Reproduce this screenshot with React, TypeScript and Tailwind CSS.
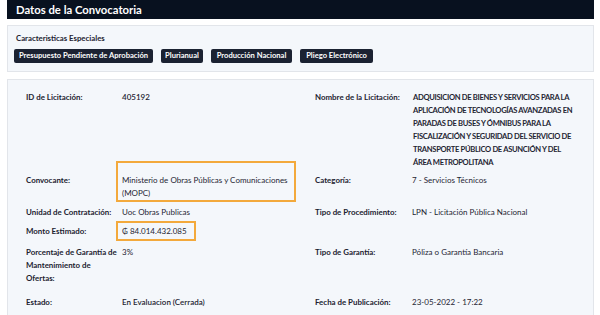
const nombre = [
  'ADQUISICION DE BIENES Y SERVICIOS PARA LA',
  'APLICACIÓN DE TECNOLOGÍAS AVANZADAS EN',
  'PARADAS DE BUSES Y ÓMNIBUS PARA LA',
  'FISCALIZACIÓN Y SEGURIDAD DEL SERVICIO DE',
  'TRANSPORTE PÚBLICO DE ASUNCIÓN Y DEL',
  'ÁREA METROPOLITANA',
];

const badges = [
  { t: 'Presupuesto Pendiente de Aprobación', w: 'w-[139px]' },
  { t: 'Plurianual', w: 'w-[42px]' },
  { t: 'Producción Nacional', w: 'w-[81px]' },
  { t: 'Pliego Electrónico', w: 'w-[73px]' },
];

const Label = ({ children }: { children: React.ReactNode }) => (
  <div className="font-bold text-[7.9px] text-[#1c2230] whitespace-nowrap">{children}</div>
);

// orange annotation frame drawn over a value
const Highlight = ({ className }: { className: string }) => (
  <span className={`pointer-events-none absolute border-2 border-[#f3a93c] ${className}`} />
);

const App = () => {
  return (
    <div className="w-[600px] h-[315px] overflow-hidden bg-white font-['Lato','Liberation_Sans',sans-serif] text-[8px] leading-[13px] text-[#1f2533]">
      <div className="mx-[7px] w-[587px]">
        {/* Header */}
        <div className="h-[19px] bg-[#08111f] flex items-center pl-[9px]">
          <h2 className="text-white font-bold text-[11.3px] leading-none">Datos de la Convocatoria</h2>
        </div>

        {/* Caracteristicas */}
        <div className="mt-[6px] border border-[#e2e5ea] bg-[#f4f7fb] pt-[6px] pb-[8px] px-[6px]">
          <div className="font-bold ml-[2px] text-[7.8px] text-[#1c2230]">Caracteristicas Especiales</div>
          <div className="mt-[4px] flex gap-[8px]">
            {badges.map((b) => (
              <span
                key={b.t}
                className={`${b.w} h-[14px] flex items-center justify-center rounded-[2px] bg-[#1b2232] text-white font-bold text-[7.6px] leading-none whitespace-nowrap`}
              >
                {b.t}
              </span>
            ))}
          </div>
        </div>

        {/* Datos */}
        <div className="mt-[7px] border border-[#e2e5ea] bg-[#f4f7fb] pt-[11px] pl-[18px] h-[300px]">
          <div className="grid grid-cols-[96px_193px_97px_172px]">
            {/* row 1 */}
            <Label>ID de Licitación:</Label>
            <div className="font-semibold">405192</div>
            <Label>Nombre de la Licitación:</Label>
            <div className="font-bold pl-[1px] text-[7.6px] tracking-[-0.32px]">
              {nombre.map((l) => (
                <div key={l} className="whitespace-nowrap">{l}</div>
              ))}
            </div>

            {/* row 2 */}
            <div className="mt-[5px]"><Label>Convocante:</Label></div>
            <div className="mt-[5px] relative">
              <div className="whitespace-nowrap">Ministerio de Obras Públicas y Comunicaciones</div>
              <div>(MOPC)</div>
              <Highlight className="left-[-6px] top-[-13px] right-[19px] bottom-[-2px]" />
            </div>
            <div className="mt-[5px]"><Label>Categoría:</Label></div>
            <div className="mt-[5px]">7 - Servicios Técnicos</div>

            {/* row 3 */}
            <div className="mt-[6px]"><Label>Unidad de Contratación:</Label></div>
            <div className="mt-[6px]">Uoc Obras Publicas</div>
            <div className="mt-[6px]"><Label>Tipo de Procedimiento:</Label></div>
            <div className="mt-[6px]">LPN - Licitación Pública Nacional</div>

            {/* row 4 */}
            <div className="mt-[6px]"><Label>Monto Estimado:</Label></div>
            <div className="mt-[6px] relative">
              <div>₲ 84.014.432.085</div>
              <Highlight className="left-[-6px] top-[-4px] right-[119px] bottom-[-3px]" />
            </div>
            <div className="mt-[6px]" />
            <div className="mt-[6px]" />

            {/* row 5 */}
            <div className="mt-[8px]">
              <Label>Porcentaje de Garantía de</Label>
              <Label>Mantenimiento de</Label>
              <Label>Ofertas:</Label>
            </div>
            <div className="mt-[8px]">3%</div>
            <div className="mt-[8px]"><Label>Tipo de Garantía:</Label></div>
            <div className="mt-[8px]">Póliza o Garantía Bancaria</div>

            {/* row 6 */}
            <div className="mt-[11px]"><Label>Estado:</Label></div>
            <div className="mt-[11px] font-semibold">En Evaluacion (Cerrada)</div>
            <div className="mt-[11px]"><Label>Fecha de Publicación:</Label></div>
            <div className="mt-[11px]">23-05-2022 - 17:22</div>
          </div>
        </div>
      </div>
    </div>
  );
};

export default App;
